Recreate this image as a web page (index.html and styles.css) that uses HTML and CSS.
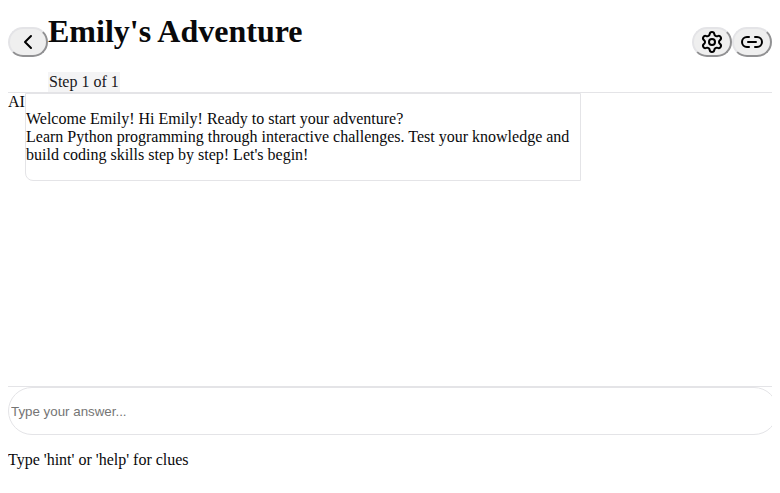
FILE: index.html
```html
<!DOCTYPE html>
<html lang="en">
<head>
<meta charset="utf-8">
<title>Emily's Adventure</title>
<link rel="stylesheet" href="styles.css">
</head>
<body>
<header class="header">
  <button class="icon-button" aria-label="Back"><svg class="icon" viewBox="0 0 24 24"><path d="m15 18-6-6 6-6"/></svg></button>
  <div class="heading">
    <h1>Emily's Adventure</h1>
    <div class="badge">Step 1 of 1</div>
  </div>
  <button class="icon-button" aria-label="Settings"><svg class="icon" viewBox="0 0 24 24"><path d="M9.671 4.136a2.34 2.34 0 0 1 4.659 0 2.34 2.34 0 0 0 3.319 1.915 2.34 2.34 0 0 1 2.33 4.033 2.34 2.34 0 0 0 0 3.831 2.34 2.34 0 0 1-2.33 4.033 2.34 2.34 0 0 0-3.319 1.915 2.34 2.34 0 0 1-4.659 0 2.34 2.34 0 0 0-3.32-1.915 2.34 2.34 0 0 1-2.33-4.033 2.34 2.34 0 0 0 0-3.831A2.34 2.34 0 0 1 6.35 6.051a2.34 2.34 0 0 0 3.319-1.915"/><circle cx="12" cy="12" r="3"/></svg></button>
  <button class="icon-button" aria-label="Copy link"><svg class="icon" viewBox="0 0 24 24"><path d="M9 17H7A5 5 0 0 1 7 7h2M15 7h2a5 5 0 1 1 0 10h-2M8 12h8"/></svg></button>
</header>
<main class="messages">
  <div class="avatar">AI</div>
  <div class="bubble"><p>Welcome Emily! Hi Emily! Ready to start your adventure?<br>Learn Python programming through interactive challenges. Test your knowledge and build coding skills step by step! Let's begin!</p></div>
</main>
<footer class="composer">
  <input class="answer" type="text" placeholder="Type your answer...">
  <p class="hint">Type 'hint' or 'help' for clues</p>
</footer>
</body>
</html>
```
FILE: styles.css
```css
body {
  margin: 0 8px;
  height: 493px;
  display: flex;
  flex-direction: column;
  overflow: hidden;
  background: #fff;
  color: #09090b;
  font: 16px/18px "Liberation Serif", serif;
}
.header {
  display: flex;
  align-items: center;
  height: 100px;
  margin-top: -8px;
  flex: none;
  border-bottom: 1px solid #e4e4e7;
}
.heading { flex: 1; }
h1 {
  margin: 21.44px 0;
  padding-bottom: 2px;
  font-size: 32px;
  line-height: 35px;
}
.badge {
  width: fit-content;
  border: 1px solid transparent;
  background: #f4f4f5;
  color: #18181b;
}
.icon-button {
  width: 40px;
  height: 30px;
  padding: 1px 6px;
  border: 2px outset #e4e4e7;
  border-radius: 16px;
  background: #efefef;
  color: #000;
}
.icon {
  display: block;
  width: 24px;
  height: 24px;
  fill: none;
  stroke: currentColor;
  stroke-width: 2;
  stroke-linecap: round;
  stroke-linejoin: round;
}
.messages {
  flex: 1;
  display: flex;
  align-items: flex-start;
}
.avatar { width: 17px; }
.bubble {
  box-sizing: border-box;
  width: 556px;
  height: 88px;
  border: 1px solid #e4e4e7;
  border-radius: 0 0 0 8px;
}
.bubble p { margin: 16px 0; }
.composer {
  height: 107px;
  width: 764px;
  overflow: hidden;
  border-top: 1px solid #e4e4e7;
  flex: none;
  box-sizing: border-box;
}
.answer {
  display: block;
  width: 100%;
  height: 44px;
  padding: 1px 2px;
  border: 1px solid #e4e4e7;
  border-radius: 24px;
  background: #fff;
  font: 13.333px "Liberation Sans", sans-serif;
}
.answer::placeholder { color: #757575; }
.hint { margin: 16px 0; }
```
